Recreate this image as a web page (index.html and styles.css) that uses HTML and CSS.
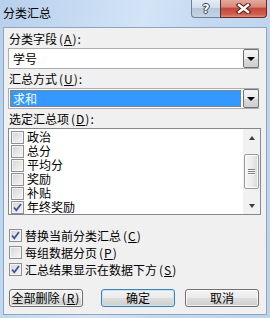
FILE: index.html
```html
<!DOCTYPE html>
<html lang="zh-CN">
<head>
<meta charset="utf-8">
<link rel="stylesheet" href="styles.css">
</head>
<body>
<div class="window">
  <div class="titlebar">
    <div class="title">分类汇总</div>
    <div class="caption-btns">
      <div class="cap help"><span>?</span></div>
      <div class="cap close">
        <svg width="15" height="11" viewBox="0 0 15 11">
          <path d="M3 2 L12 9 M12 2 L3 9" stroke="#5a1f16" stroke-width="4.6" stroke-linecap="square" fill="none"/>
          <path d="M3 2 L12 9 M12 2 L3 9" stroke="#ffffff" stroke-width="2.4" stroke-linecap="square" fill="none"/>
        </svg>
      </div>
    </div>
  </div>
  <div class="client">
    <div class="label">分类字段<span class="key">(<u>A</u>):</span></div>
    <div class="combo">
      <div class="combo-field"><span class="val">学号</span></div>
      <div class="drop"><i></i></div>
    </div>
    <div class="label">汇总方式<span class="key">(<u>U</u>):</span></div>
    <div class="combo">
      <div class="combo-field"><span class="val sel">求和</span></div>
      <div class="drop"><i></i></div>
    </div>
    <div class="label">选定汇总项<span class="key">(<u>D</u>):</span></div>
    <div class="list">
      <div class="items">
        <div class="item"><span class="cb"></span>政治</div>
        <div class="item"><span class="cb"></span>总分</div>
        <div class="item"><span class="cb"></span>平均分</div>
        <div class="item"><span class="cb"></span>奖励</div>
        <div class="item"><span class="cb"></span>补贴</div>
        <div class="item"><span class="cb checked"><svg width="11" height="11" viewBox="0 0 11 11"><path d="M2 5.5 L4.3 8.3 L9 2" stroke="#3b5498" stroke-width="1.7" fill="none"/></svg></span>年终奖励</div>
      </div>
      <div class="scrollbar">
        <div class="arrow"><i class="tri-up"></i></div>
        <div class="track"><div class="thumb"><i></i><i></i><i></i></div></div>
        <div class="arrow"><i class="tri-down"></i></div>
      </div>
    </div>
    <div class="options">
      <div class="opt"><span class="cb checked"><svg width="11" height="11" viewBox="0 0 11 11"><path d="M2 5.5 L4.3 8.3 L9 2" stroke="#3b5498" stroke-width="1.7" fill="none"/></svg></span>替换当前分类汇总<span class="key">(<u>C</u>)</span></div>
      <div class="opt"><span class="cb"></span>每组数据分页<span class="key">(<u>P</u>)</span></div>
      <div class="opt"><span class="cb checked"><svg width="11" height="11" viewBox="0 0 11 11"><path d="M2 5.5 L4.3 8.3 L9 2" stroke="#3b5498" stroke-width="1.7" fill="none"/></svg></span>汇总结果显示在数据下方<span class="key">(<u>S</u>)</span></div>
    </div>
    <div class="buttons">
      <div class="btn">全部删除<span class="key">(<u>R</u>)</span></div>
      <div class="btn-group">
        <div class="btn default">确定</div>
        <div class="btn">取消</div>
      </div>
    </div>
  </div>
</div>
</body>
</html>
```

FILE: styles.css
```css
* { box-sizing: border-box; }
html, body { margin: 0; padding: 0; }
body {
  font-family: "Noto Sans CJK SC", "Noto Sans", sans-serif;
  font-size: 12px;
  color: #000;
  background: #c3d8f0;
}
.window {
  width: 270px;
  height: 318px;
  display: flex;
  flex-direction: column;
  background: linear-gradient(100deg, #b8d0ec 0%, #c6dbf2 25%, #d3e4f6 45%, #c4d9f1 65%, #bcd3ed 100%);
}
.titlebar {
  height: 27px;
  display: flex;
  justify-content: space-between;
  align-items: flex-start;
}
.title {
  margin-top: 5px;
  padding-left: 3px;
  line-height: 16px;
  font-size: 12px;
  color: #000;
}
.caption-btns {
  display: flex;
  margin-right: 3px;
}
.cap {
  height: 18px;
  display: flex;
  align-items: center;
  justify-content: center;
  border: 1px solid #6f819a;
  border-top: none;
}
.help {
  width: 29px;
  border-radius: 0 0 0 4px;
  border-right: none;
  background: linear-gradient(#e4ecf5 0%, #d2deeb 45%, #b6c7da 50%, #c5d4e4 100%);
}
.help span {
  font-family: "DejaVu Sans", sans-serif;
  font-weight: bold;
  font-size: 12px;
  line-height: 14px;
  color: #fff;
  text-shadow: 1px 0 0 #33404f, -1px 0 0 #33404f, 0 1px 0 #33404f, 0 -1px 0 #33404f;
}
.close {
  width: 47px;
  border-radius: 0 0 4px 0;
  border-color: #6b2a20;
  background: linear-gradient(#e6a89c 0%, #d88a7c 40%, #c4473a 50%, #d0604f 85%, #e0917f 100%);
}
.client {
  flex: 1;
  margin: 0 3px 3px 3px;
  border: 1px solid #8ea4bf;
  background: #f0f0f0;
  padding: 3px 7px 0 4px;
  display: flex;
  flex-direction: column;
}
.label {
  height: 16px;
  line-height: 16px;
  padding-left: 1px;
  white-space: nowrap;
}
.key {
  letter-spacing: 1px;
  margin-left: 2px;
}
.combo {
  height: 21px;
  margin-top: 1px;
  margin-bottom: 2px;
  display: flex;
  border: 1px solid #abadb3;
  background: #fff;
}
.combo + .label { margin-top: 0; }
.combo-field {
  flex: 1;
  padding: 1px 2px 1px 1px;
  display: flex;
}
.val {
  flex: 1;
  line-height: 15px;
  padding-left: 2px;
  border: 1px solid transparent;
}
.val.sel {
  background: #3399ff;
  color: #fff;
  border: 1px dotted #c8701e;
}
.drop {
  width: 16px;
  margin: 0 -1px 0 0;
  border: 1px solid #707070;
  border-radius: 2px;
  background: linear-gradient(#f4f4f4 0%, #eaeaea 50%, #dadada 51%, #cfcfcf 100%);
  display: flex;
  align-items: center;
  justify-content: center;
}
.drop i {
  width: 0;
  height: 0;
  border-left: 4px solid transparent;
  border-right: 4px solid transparent;
  border-top: 4px solid #000;
  margin-top: 1px;
}
.list {
  height: 87px;
  margin-top: 1px;
  margin-right: -2px;
  border: 1px solid #828790;
  background: #fff;
  display: flex;
}
.items {
  flex: 1;
  padding: 1px 0 0 2px;
}
.item {
  height: 14px;
  line-height: 14px;
  display: flex;
  align-items: center;
  white-space: nowrap;
}
.cb {
  width: 13px;
  height: 13px;
  flex: none;
  margin-right: 3px;
  border: 1px solid #8e8f8f;
  background: linear-gradient(135deg, #d4d4d4 0%, #e6e6e6 50%, #f6f6f6 100%);
  box-shadow: inset 0 0 0 1px #f4f4f4;
  display: flex;
  align-items: center;
  justify-content: center;
}
.cb svg { display: block; }
.scrollbar {
  width: 17px;
  background: #f1f1f1;
  display: flex;
  flex-direction: column;
}
.arrow {
  height: 17px;
  display: flex;
  align-items: center;
  justify-content: center;
}
.tri-up {
  width: 0; height: 0;
  border-left: 3.5px solid transparent;
  border-right: 3.5px solid transparent;
  border-bottom: 4px solid #3c3c3c;
}
.tri-down {
  width: 0; height: 0;
  border-left: 3.5px solid transparent;
  border-right: 3.5px solid transparent;
  border-top: 4px solid #3c3c3c;
}
.track {
  flex: 1;
  padding: 8px 1px 0 1px;
}
.thumb {
  height: 35px;
  border: 1px solid #9a9a9a;
  border-radius: 2px;
  background: linear-gradient(90deg, #f5f5f5 0%, #ececec 50%, #d9d9d9 100%);
  box-shadow: inset 0 0 0 1px #fbfbfb;
  display: flex;
  flex-direction: column;
  align-items: center;
  justify-content: center;
  gap: 1px;
}
.thumb i {
  width: 7px;
  height: 1px;
  background: #7d7d7d;
  box-shadow: 0 1px 0 #ffffff;
}
.options {
  margin-top: 12px;
  padding-left: 1px;
}
.opt {
  height: 17px;
  line-height: 17px;
  display: flex;
  align-items: center;
  white-space: nowrap;
}
.buttons {
  margin-top: 11px;
  padding-left: 1px;
  display: flex;
  justify-content: space-between;
}
.btn-group {
  display: flex;
  gap: 10px;
}
.btn {
  width: 74px;
  height: 18px;
  border: 1px solid #707070;
  border-radius: 3px;
  background: linear-gradient(#f3f3f3 0%, #ebebeb 48%, #dddddd 52%, #cfcfcf 100%);
  box-shadow: inset 0 0 0 1px rgba(255,255,255,0.75);
  text-align: center;
  line-height: 16px;
  white-space: nowrap;
}
.btn.default {
  border-color: #3c7fb1;
  box-shadow: inset 0 0 0 1px #c7e6f8;
}
```
